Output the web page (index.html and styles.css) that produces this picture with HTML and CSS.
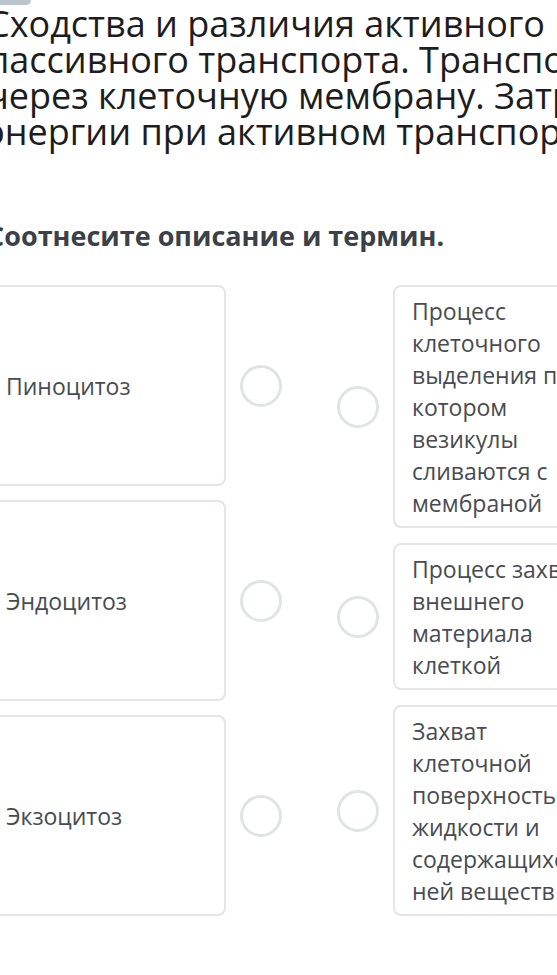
FILE: index.html
```html
<!DOCTYPE html>
<html lang="ru">
<head>
<meta charset="utf-8">
<link rel="stylesheet" href="styles.css">
</head>
<body>
<div class="page">
  <div class="tab"></div>
  <p class="question">Сходства и различия активного и пассивного транспорта. Транспорт через клеточную мембрану. Затраты энергии при активном транспорте</p>
  <h2 class="task">Соотнесите описание и термин.</h2>
  <div class="matching">
    <div class="col col-left">
      <div class="row row-left">
        <div class="card card-term">Пиноцитоз</div>
        <span class="pin"></span>
      </div>
      <div class="row row-left">
        <div class="card card-term">Эндоцитоз</div>
        <span class="pin"></span>
      </div>
      <div class="row row-left">
        <div class="card card-term">Экзоцитоз</div>
        <span class="pin"></span>
      </div>
    </div>
    <div class="col col-right">
      <div class="row row-right">
        <span class="pin"></span>
        <div class="card card-desc">Процесс клеточного выделения при котором везикулы сливаются с мембраной</div>
      </div>
      <div class="row row-right">
        <span class="pin"></span>
        <div class="card card-desc">Процесс захвата внешнего материала клеткой</div>
      </div>
      <div class="row row-right">
        <span class="pin"></span>
        <div class="card card-desc">Захват клеточной поверхностью жидкости и содержащихся в ней веществ</div>
      </div>
    </div>
  </div>
</div>
</body>
</html>
```

FILE: styles.css
```css
html, body {
  margin: 0;
  padding: 0;
  background: #ffffff;
  overflow: hidden;
}

body {
  width: 557px;
  height: 975px;
  font-family: "Open Sans", "Noto Sans", sans-serif;
}

.page {
  margin-left: -13px;
  width: 665px;
}

.tab {
  width: 44px;
  height: 5px;
  background: #b9c5ce;
  border-radius: 0 0 8px 8px;
}

.question {
  margin: 1px 0 0 0;
  font-size: 36px;
  line-height: 36px;
  color: #1d1d1d;
}

.task {
  margin: 68px 0 0 0;
  font-size: 27px;
  line-height: 36px;
  font-weight: 700;
  color: #3b4147;
}

.matching {
  margin-top: 31px;
  display: flex;
  align-items: stretch;
  gap: 55px;
}

.col {
  display: flex;
  flex-direction: column;
}

.col-left {
  gap: 14px;
}

.col-right {
  gap: 15px;
}

.row {
  display: flex;
  align-items: center;
  gap: 14px;
}

.row-left {
  flex: 1 1 0;
}

.card {
  box-sizing: border-box;
  width: 239px;
  border: 2px solid #e2e6e8;
  border-radius: 8px;
  background: #ffffff;
  font-size: 23px;
  line-height: 32px;
  color: #474c51;
}

.card-term {
  align-self: stretch;
  display: flex;
  align-items: center;
  padding: 0 17px;
}

.card-desc {
  padding: 8px 25px 7px 17px;
}

.pin {
  box-sizing: border-box;
  flex: none;
  width: 42px;
  height: 42px;
  border: 3px solid #e0e4e7;
  border-radius: 50%;
  background: #ffffff;
}
```
